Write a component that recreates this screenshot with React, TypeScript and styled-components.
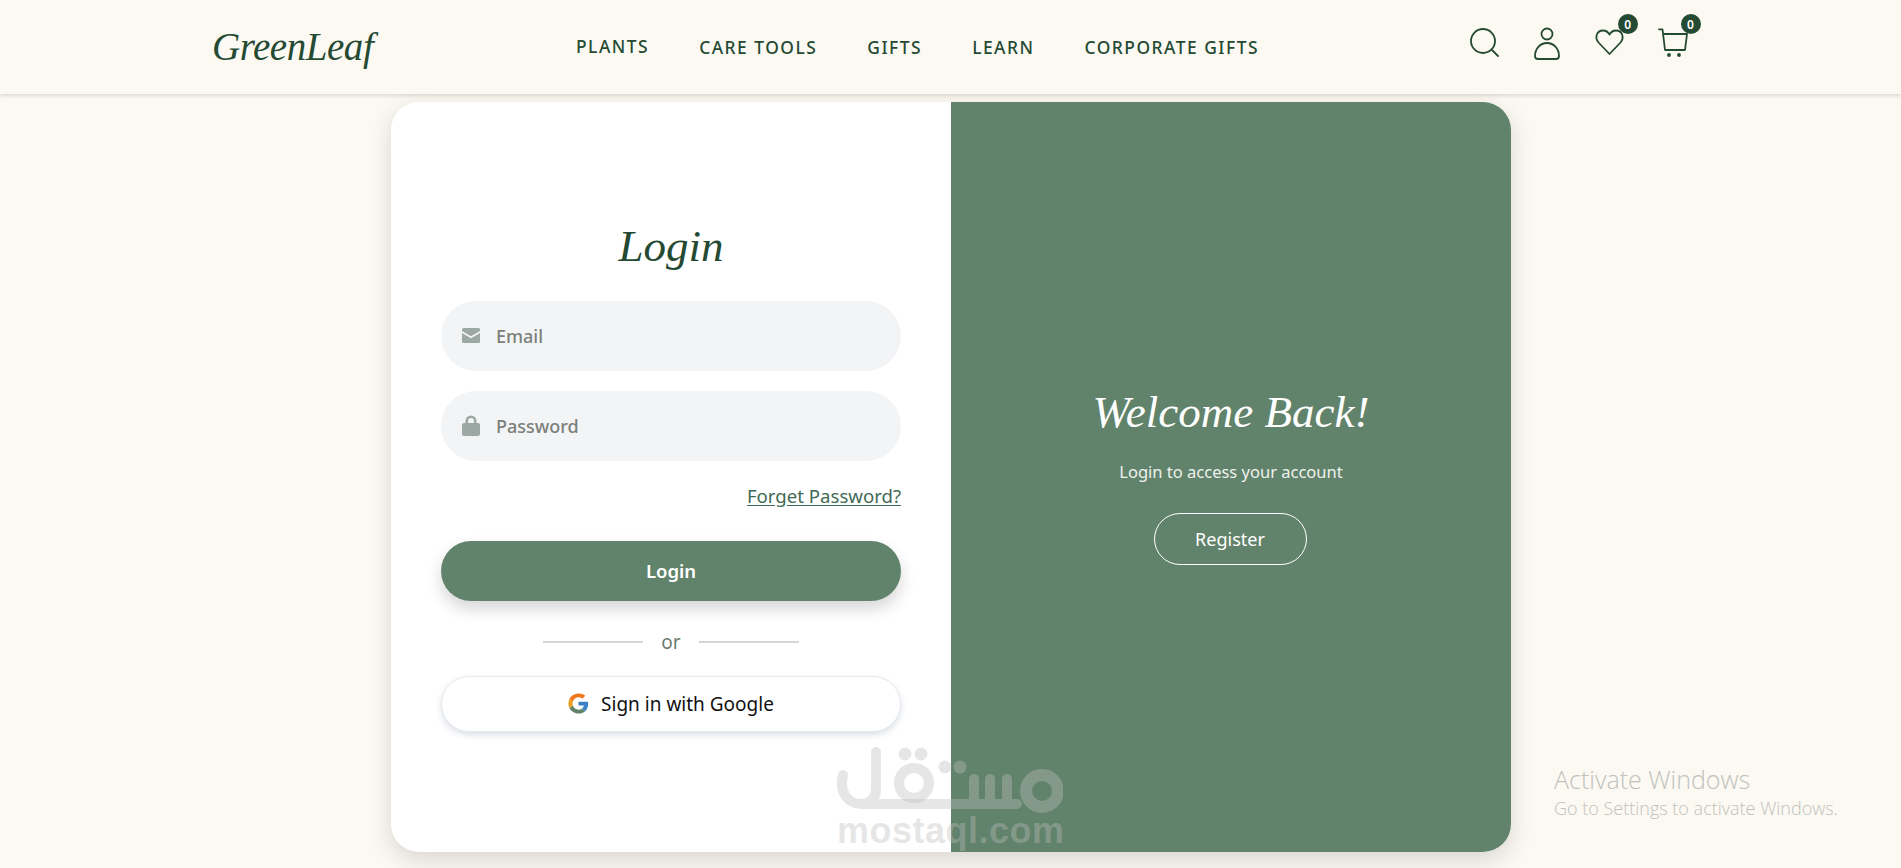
import React from "react";
import styled, { createGlobalStyle } from "styled-components";

const dark = "#254a33";
const green = "#62836b";
const cream = "#fcf9f3";
const sans = `"Noto Sans", "Open Sans", sans-serif`;
const serif = `"Liberation Serif", serif`;

const Global = createGlobalStyle`
  html, body { margin: 0; padding: 0; height: 868px; overflow: hidden; background: ${cream}; }
  body { font-family: ${sans}; }
  * { box-sizing: border-box; }
`;

const Page = styled.div`
  position: relative;
  width: 1901px;
  height: 868px;
  overflow: hidden;
`;

const Header = styled.header`
  height: 94px;
  display: flex;
  align-items: center;
  padding-left: 212px;
  background: ${cream};
  box-shadow: 0 2px 4px rgba(0, 0, 0, 0.13);
`;

const Logo = styled.div`
  width: 364px;
  font: italic 400 39px ${serif};
  letter-spacing: -0.45px;
  color: ${dark};
  padding-bottom: 2px;
`;

const Nav = styled.nav`
  display: flex;
  align-items: center;
  gap: 50px;
  width: 892px;
`;

const NavLink = styled.a<{ $lift?: boolean }>`
  font-size: 17.4px;
  font-weight: 500;
  letter-spacing: 1.5px;
  color: ${dark};
  white-space: nowrap;
  margin-top: ${(p) => (p.$lift ? "-2px" : "0")};
`;

const Icons = styled.div`
  display: flex;
  gap: 30.85px;
  padding-bottom: 8px;
`;

const IconBox = styled.div`
  position: relative;
  width: 32px;
  height: 34px;
  svg {
    display: block;
    overflow: visible;
    fill: none;
    stroke: ${dark};
    stroke-width: 1.8;
    stroke-linecap: round;
    stroke-linejoin: round;
  }
`;

const Badge = styled.span`
  position: absolute;
  left: 24px;
  top: -12px;
  width: 20px;
  height: 20px;
  border-radius: 50%;
  background: ${dark};
  color: #fff;
  font-size: 12px;
  font-weight: 600;
  display: flex;
  align-items: center;
  justify-content: center;
`;

const Card = styled.main`
  width: 1120px;
  height: 750px;
  margin: 8px 0 0 391px;
  display: grid;
  grid-template-columns: 560px 560px;
  border-radius: 28px;
  background: #fff;
  box-shadow: 0 8px 24px rgba(0, 0, 0, 0.14);
`;

const FormPane = styled.section`
  display: flex;
  flex-direction: column;
  justify-content: center;
  padding: 0 50px 3px;
`;

const Title = styled.h1`
  margin: 0 0 29px;
  font: italic 400 45px/52px ${serif};
  color: ${dark};
  text-align: center;
`;

const Field = styled.label`
  height: 70px;
  margin-bottom: 20px;
  display: flex;
  align-items: center;
  gap: 14px;
  padding-left: 21px;
  background: #f3f4f6;
  border-radius: 35px;
  svg {
    width: 18px;
    flex: none;
    fill: #9ca8a3;
  }
`;

const Input = styled.input`
  flex: 1;
  min-width: 0;
  border: 0;
  outline: 0;
  background: transparent;
  font: 500 18px ${sans};
  color: #333;
  &::placeholder {
    color: #7b8079;
    opacity: 1;
  }
`;

const Forgot = styled.a`
  align-self: flex-end;
  margin: 3px 0 0;
  font-size: 18.6px;
  line-height: 24px;
  color: #3f6a55;
  text-decoration: underline;
  text-underline-offset: 2px;
`;

const PrimaryButton = styled.button`
  height: 60px;
  margin-top: 33px;
  border: 0;
  border-radius: 30px;
  background: ${green};
  color: #fff;
  font: 600 18.5px ${sans};
  box-shadow: 0 8px 16px rgba(0, 0, 0, 0.16);
`;

const Divider = styled.div`
  margin-top: 27px;
  height: 28px;
  display: flex;
  align-items: center;
  justify-content: center;
  gap: 18px;
  color: #6d7c72;
  font-size: 19px;
  &::before,
  &::after {
    content: "";
    width: 100px;
    height: 2px;
    background: #d6d6d6;
  }
`;

const GoogleButton = styled.button`
  height: 56px;
  margin-top: 20px;
  border: 1px solid #e5e9ef;
  border-radius: 28px;
  background: #fff;
  color: #111;
  font: 400 19px ${sans};
  display: flex;
  align-items: center;
  justify-content: center;
  gap: 12px;
  box-shadow: 0 3px 6px rgba(80, 100, 130, 0.2);
`;

const WelcomePane = styled.section`
  background: ${green};
  color: #fff;
  border-radius: 0 28px 28px 0;
  display: flex;
  flex-direction: column;
  align-items: center;
  justify-content: center;
  padding-bottom: 4px;
`;

const WelcomeTitle = styled.h2`
  margin: 0 0 22px;
  font: italic 400 45px/52px ${serif};
  color: #fff;
`;

const Sub = styled.p`
  margin: 0 0 29px;
  font-size: 16.5px;
  line-height: 24px;
  color: #eef1ee;
`;

const RegisterButton = styled.button`
  width: 153px;
  height: 52px;
  margin-right: 2px;
  border: 1px solid #fff;
  border-radius: 26px;
  background: transparent;
  color: #fff;
  font: 400 18px ${sans};
`;

const Watermark = styled.div`
  position: absolute;
  left: 837px;
  top: 747px;
  width: 228px;
  color: rgba(189, 189, 189, 0.38);
  pointer-events: none;
  svg {
    display: block;
    width: 226px;
    height: 66px;
  }
`;

const WatermarkText = styled.div`
  margin-top: 1px;
  font: 700 36px/34px "Liberation Sans", sans-serif;
  letter-spacing: 0.5px;
  white-space: nowrap;
`;

const Activate = styled.div`
  position: absolute;
  left: 1554px;
  top: 763px;
  color: #bfc2bc;
  font-family: "Open Sans", sans-serif;
  font-weight: 300;
  white-space: nowrap;
`;

const ActivateTitle = styled.div`
  font-size: 25px;
  line-height: 32px;
`;

const ActivateSub = styled.div`
  font-size: 18px;
  line-height: 26px;
`;

const MailIcon = () => (
  <svg viewBox="0 0 18 15" height="15">
    <path d="M1.5 0h15A1.5 1.5 0 0 1 18 1.5V3L9 8.2 0 3V1.5A1.5 1.5 0 0 1 1.5 0Z" />
    <path d="M0 5l9 5.2L18 5v8.5a1.5 1.5 0 0 1-1.5 1.5h-15A1.5 1.5 0 0 1 0 13.5Z" />
  </svg>
);

const LockIcon = () => (
  <svg viewBox="0 0 18 21" height="21">
    <path d="M3.5 8V6a5.5 5.5 0 0 1 11 0v2H16a2 2 0 0 1 2 2v9a2 2 0 0 1-2 2H2a2 2 0 0 1-2-2v-9a2 2 0 0 1 2-2Zm2.6 0h5.8V6a2.9 2.9 0 0 0-5.800 0Z" />
  </svg>
);

const GoogleIcon = () => (
  <svg viewBox="0 0 48 48" width="21" height="21">
    <path fill="#3d80c6" d="M46 24.5c0-1.600-.15-3.100-.4-4.500H24v8.800h12.400a10.600 10.600 0 0 1-4.600 7l7.400 5.700C43.500 37.500 46 31.600 46 24.500Z" />
    <path fill="#62836b" d="M24 47c6.200 0 11.400-2 15.200-5.500l-7.400-5.700c-2 1.400-4.700 2.200-7.800 2.200-6 0-11.100-4-12.900-9.500l-7.700 5.900C7.200 41.900 15 47 24 47Z" />
    <path fill="#e9a21f" d="M11.100 28.500a13.800 13.800 0 0 1 0-9l-7.700-5.900a23 23 0 0 0 0 20.800Z" />
    <path fill="#f0761c" d="M24 9.500c3.400 0 6.400 1.200 8.800 3.400l6.600-6.600C35.400 2.600 30.200 1 24 1 15 1 7.200 6.100 3.400 13.600l7.700 5.900C12.900 13.500 18 9.500 24 9.500Z" />
  </svg>
);

export default function App() {
  return (
    <Page>
      <Global />
      <Header>
        <Logo>GreenLeaf</Logo>
        <Nav>
          <NavLink $lift>PLANTS</NavLink>
          <NavLink>CARE TOOLS</NavLink>
          <NavLink>GIFTS</NavLink>
          <NavLink>LEARN</NavLink>
          <NavLink>CORPORATE GIFTS</NavLink>
        </Nav>
        <Icons>
          <IconBox>
            <svg viewBox="0 0 32 34" width="32" height="34">
              <circle cx="15" cy="15" r="12" />
              <path d="M24 24l6 6" />
            </svg>
          </IconBox>
          <IconBox>
            <svg viewBox="0 0 32 34" width="32" height="34">
              <circle cx="16" cy="8" r="5.500" />
              <path d="M7 33h18a3 3 0 0 0 3-3c0-7-5-13-12-13S4 23 4 30a3 3 0 0 0 3 3Z" />
            </svg>
          </IconBox>
          <IconBox>
            <svg viewBox="0 0 32 34" width="32" height="34">
              <path d="M15.500 28 4.500 16.500C.5 12 2.500 4.500 9 4.500c3 0 5 1.500 6.500 4 1.500-2.500 3.500-4 6.500-4 6.500 0 8.500 7.500 4.500 12Z" />
            </svg>
            <Badge>0</Badge>
          </IconBox>
          <IconBox>
            <svg viewBox="0 0 32 34" width="32" height="34">
              <path d="M2 3.300h3.500L8 24h20l2-16H6" />
              <circle cx="12" cy="29" r="1" />
              <circle cx="22" cy="29" r="1" />
            </svg>
            <Badge>0</Badge>
          </IconBox>
        </Icons>
      </Header>

      <Card>
        <FormPane>
          <Title>Login</Title>
          <Field>
            <MailIcon />
            <Input placeholder="Email" />
          </Field>
          <Field>
            <LockIcon />
            <Input placeholder="Password" type="password" />
          </Field>
          <Forgot>Forget Password?</Forgot>
          <PrimaryButton>Login</PrimaryButton>
          <Divider>or</Divider>
          <GoogleButton>
            <GoogleIcon />
            Sign in with Google
          </GoogleButton>
        </FormPane>
        <WelcomePane>
          <WelcomeTitle>Welcome Back!</WelcomeTitle>
          <Sub>Login to access your account</Sub>
          <RegisterButton>Register</RegisterButton>
        </WelcomePane>
      </Card>

      <Watermark>
        <svg viewBox="0 0 226 66" fill="none" stroke="currentColor" strokeWidth="10" strokeLinecap="round">
          <path d="M39 5v38a14 14 0 0 1-14 14C10 57 2 45 6 28M25 57h155M137 32v25M153 32v25M170 32v25" />
          <circle cx="77" cy="36" r="15" />
          <circle cx="205" cy="44" r="16" strokeWidth="12" />
          <g fill="currentColor" stroke="none">
            <circle cx="68" cy="7" r="6.500" />
            <circle cx="84" cy="7" r="6.500" />
            <circle cx="108" cy="20" r="6.500" />
            <circle cx="123" cy="20" r="6.500" />
          </g>
        </svg>
        <WatermarkText>mostaql.com</WatermarkText>
      </Watermark>

      <Activate>
        <ActivateTitle>Activate Windows</ActivateTitle>
        <ActivateSub>Go to Settings to activate Windows.</ActivateSub>
      </Activate>
    </Page>
  );
}
